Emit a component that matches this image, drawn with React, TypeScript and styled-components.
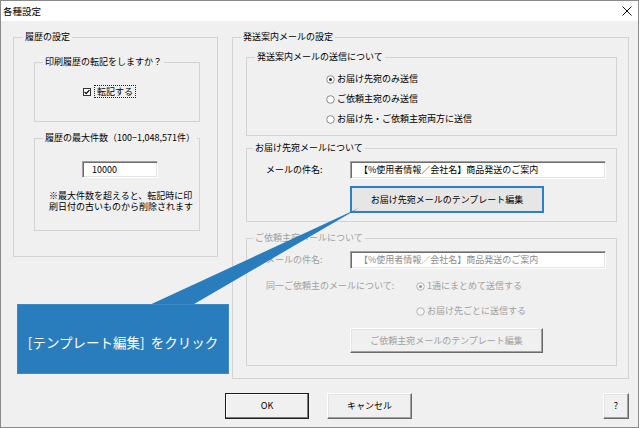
import React from "react";
import styled, { createGlobalStyle, css } from "styled-components";

const FONT = `"Noto Sans CJK JP", "Noto Sans", "Liberation Sans", sans-serif`;

const GlobalStyle = createGlobalStyle`
  html, body { margin: 0; padding: 0; background: #ffffff; }
  body { font-family: ${FONT}; }
  * { box-sizing: border-box; }
`;

const Window = styled.div`
  position: relative;
  width: 639px;
  height: 428px;
  border: 1px solid #8a8a8a;
  background: #f0f0f0;
  display: flex;
  flex-direction: column;
  font-family: ${FONT};
  font-size: 9px;
  line-height: 12px;
  color: #000;
  overflow: hidden;
`;

const TitleBar = styled.div`
  flex: none;
  height: 20px;
  background: #ffffff;
  display: flex;
  align-items: center;
  justify-content: space-between;
  padding: 0 6px 0 2px;
`;

const TitleText = styled.span`
  font-size: 9.5px;
  color: #000;
`;

const Main = styled.div`
  display: flex;
  align-items: flex-start;
  gap: 14px;
  padding: 16px 9px 0 12px;
`;

const Group = styled.div<{ $w: number; $h: number; $mt?: number; $ml?: number }>`
  position: relative;
  flex: none;
  width: ${(p) => p.$w}px;
  height: ${(p) => p.$h}px;
  margin-top: ${(p) => p.$mt ?? 0}px;
  margin-left: ${(p) => p.$ml ?? 0}px;
  border: 1px solid #d3d3d3;
  display: flex;
  flex-direction: column;
  align-items: flex-start;
`;

const Legend = styled.span<{ $off?: number; $disabled?: boolean }>`
  position: absolute;
  top: -7px;
  left: ${(p) => p.$off ?? 8}px;
  padding: 0 2px;
  background: #f0f0f0;
  line-height: 12px;
  white-space: nowrap;
  color: ${(p) => (p.$disabled ? "#a0a0a0" : "#000")};
`;

const CheckRow = styled.div`
  display: flex;
  align-items: center;
  gap: 3px;
  margin: 22px 0 0 48px;
`;

const FocusLabel = styled.span`
  border: 1px dotted #222;
  padding: 0 2px;
  line-height: 11px;
`;

const TextBox = styled.div<{ $w: number; $h: number; $disabled?: boolean; $pad?: number }>`
  flex: none;
  width: ${(p) => p.$w}px;
  height: ${(p) => p.$h}px;
  background: #ffffff;
  border: 1px solid;
  border-color: #a0a0a0 #ffffff #ffffff #a0a0a0;
  box-shadow: inset 1px 1px #6d6d6d, inset -1px -1px #e3e3e3;
  display: flex;
  align-items: center;
  padding-left: ${(p) => p.$pad ?? 8}px;
  white-space: nowrap;
  color: ${(p) => (p.$disabled ? "#8c8c8c" : "#000")};
`;

const CountBox = styled(TextBox)`
  margin: 22px 0 0 47px;
`;

const Note = styled.p`
  margin: 12px 0 0 14px;
  line-height: 11px;
  white-space: nowrap;
`;

const RadioList = styled.div`
  display: flex;
  flex-direction: column;
  gap: 8px;
  margin: 15px 0 0 79px;
`;

const RadioRow = styled.div<{ $disabled?: boolean; $mt?: number; $ml?: number }>`
  display: flex;
  align-items: center;
  gap: 2px;
  height: 12px;
  white-space: nowrap;
  margin-top: ${(p) => p.$mt ?? 0}px;
  margin-left: ${(p) => p.$ml ?? 0}px;
  color: ${(p) => (p.$disabled ? "#a0a0a0" : "#000")};
`;

const FieldRow = styled.div<{ $mt: number }>`
  display: flex;
  align-items: center;
  margin: ${(p) => p.$mt}px 0 0 19px;
`;

const FieldLabel = styled.span<{ $w: number; $disabled?: boolean }>`
  flex: none;
  width: ${(p) => p.$w}px;
  white-space: nowrap;
  color: ${(p) => (p.$disabled ? "#a0a0a0" : "#000")};
`;

const PushButton = styled.button<{
  $w: number;
  $h: number;
  $variant?: "default" | "focus" | "normal";
  $mt?: number;
  $ml?: number;
}>`
  flex: none;
  width: ${(p) => p.$w}px;
  height: ${(p) => p.$h}px;
  margin: ${(p) => p.$mt ?? 0}px 0 0 ${(p) => p.$ml ?? 0}px;
  padding: 0;
  font-family: ${FONT};
  font-size: 9px;
  line-height: 12px;
  color: #000;
  background: #f0f0f0;
  border: 1px solid;
  border-color: #ffffff #696969 #696969 #ffffff;
  box-shadow: inset -1px -1px #a0a0a0, inset 1px 1px #e3e3e3;
  &:disabled {
    color: #a0a0a0;
  }
  ${(p) =>
    p.$variant === "default" &&
    css`
      border: 1px solid #1c1c1c;
      box-shadow: inset -1px -1px #7a7a7a, inset 1px 1px #ffffff;
    `}
  ${(p) =>
    p.$variant === "focus" &&
    css`
      background: #e6e6e6;
      border: 2px solid #2c7fc8;
      box-shadow: none;
    `}
`;

const ButtonRow = styled.div`
  display: flex;
  align-items: center;
  gap: 18px;
  margin-top: 14px;
  padding: 0 9px 0 224px;
`;

const HelpButton = styled(PushButton)`
  margin-left: auto;
`;

const CalloutBox = styled.div`
  position: absolute;
  left: 16px;
  top: 303px;
  width: 212px;
  height: 70px;
  background: #2a7dbd;
  border: 1px solid #3d8ac6;
  color: #ffffff;
  font-size: 13.5px;
  line-height: 18px;
  display: flex;
  align-items: center;
  justify-content: center;
  padding-top: 6px;
  white-space: pre;
`;

const CalloutPointer = styled.svg`
  position: absolute;
  left: 143px;
  top: 206px;
`;

const CheckIcon = () => (
  <svg width="8" height="8" viewBox="0 0 8 8">
    <rect x="0.5" y="0.5" width="7" height="7" fill="#fff" stroke="#333" />
    <path d="M1.6 3.9 L3.2 5.6 L6.3 2.1" fill="none" stroke="#000" strokeWidth="1.3" />
  </svg>
);

const RadioIcon = ({ checked, disabled }: { checked?: boolean; disabled?: boolean }) => (
  <svg width="9" height="9" viewBox="0 0 9 9">
    <circle cx="4.5" cy="4.5" r="3.8" fill={disabled ? "#f4f4f4" : "#fff"} stroke={disabled ? "#b4b4b4" : "#8a8a8a"} />
    {checked && <circle cx="4.5" cy="4.5" r="1.5" fill={disabled ? "#9a9a9a" : "#222"} />}
  </svg>
);

const CloseIcon = () => (
  <svg width="10" height="10" viewBox="0 0 10 10">
    <path d="M0.5 0.5 L9.5 9.5 M9.5 0.5 L0.5 9.5" stroke="#111" strokeWidth="1" />
  </svg>
);

export default function App() {
  return (
    <>
      <GlobalStyle />
      <Window>
        <TitleBar>
          <TitleText>各種設定</TitleText>
          <CloseIcon />
        </TitleBar>
        <Main>
          <Group $w={205} $h={220}>
            <Legend $off={9}>履歴の設定</Legend>
            <Group $w={166} $h={60} $mt={24} $ml={20}>
              <Legend>印刷履歴の転記をしますか？</Legend>
              <CheckRow>
                <CheckIcon />
                <FocusLabel>転記する</FocusLabel>
              </CheckRow>
            </Group>
            <Group $w={166} $h={93} $mt={16} $ml={20}>
              <Legend>履歴の最大件数（100−1,048,571件）</Legend>
              <CountBox $w={76} $h={17} $pad={9}>10000</CountBox>
              <Note>
                ※最大件数を超えると、転記時に印
                <br />
                刷日付の古いものから削除されます
              </Note>
            </Group>
          </Group>

          <Group $w={397} $h={342}>
            <Legend>発送案内メールの設定</Legend>
            <Group $w={371} $h={79} $mt={19} $ml={13}>
              <Legend>発送案内メールの送信について</Legend>
              <RadioList>
                <RadioRow>
                  <RadioIcon checked />
                  お届け先宛のみ送信
                </RadioRow>
                <RadioRow>
                  <RadioIcon />
                  ご依頼主宛のみ送信
                </RadioRow>
                <RadioRow>
                  <RadioIcon />
                  お届け先・ご依頼主宛両方に送信
                </RadioRow>
              </RadioList>
            </Group>
            <Group $w={371} $h={74} $mt={12} $ml={13}>
              <Legend $off={6}>お届け先宛メールについて</Legend>
              <FieldRow $mt={12}>
                <FieldLabel $w={84}>メールの件名:</FieldLabel>
                <TextBox $w={256} $h={18}>【%使用者情報／会社名】商品発送のご案内</TextBox>
              </FieldRow>
              <PushButton $w={194} $h={27} $variant="focus" $mt={7} $ml={103}>
                お届け先宛メールのテンプレート編集
              </PushButton>
            </Group>
            <Group $w={371} $h={128} $mt={16} $ml={13}>
              <Legend $off={6} $disabled>
                ご依頼主宛メールについて
              </Legend>
              <FieldRow $mt={12}>
                <FieldLabel $w={84} $disabled>
                  メールの件名:
                </FieldLabel>
                <TextBox $w={256} $h={18} $disabled>
                  【%使用者情報／会社名】商品発送のご案内
                </TextBox>
              </FieldRow>
              <FieldRow $mt={11}>
                <FieldLabel $w={150} $disabled>
                  同一ご依頼主のメールについて:
                </FieldLabel>
                <RadioRow $disabled>
                  <RadioIcon checked disabled />
                  1通にまとめて送信する
                </RadioRow>
              </FieldRow>
              <RadioRow $disabled $mt={13} $ml={169}>
                <RadioIcon disabled />
                お届け先ごとに送信する
              </RadioRow>
              <PushButton $w={193} $h={25} $mt={11} $ml={103} disabled>
                ご依頼主宛メールのテンプレート編集
              </PushButton>
            </Group>
          </Group>
        </Main>
        <ButtonRow>
          <PushButton $w={84} $h={26} $variant="default">
            OK
          </PushButton>
          <PushButton $w={85} $h={26}>
            キャンセル
          </PushButton>
          <HelpButton $w={26} $h={26}>
            ?
          </HelpButton>
        </ButtonRow>

        <CalloutPointer width="216" height="101" viewBox="0 0 216 101">
          <polygon points="1,100 45,100 215,1" fill="#2a7dbd" />
        </CalloutPointer>
        <CalloutBox>{"[テンプレート編集]  をクリック"}</CalloutBox>
      </Window>
    </>
  );
}
